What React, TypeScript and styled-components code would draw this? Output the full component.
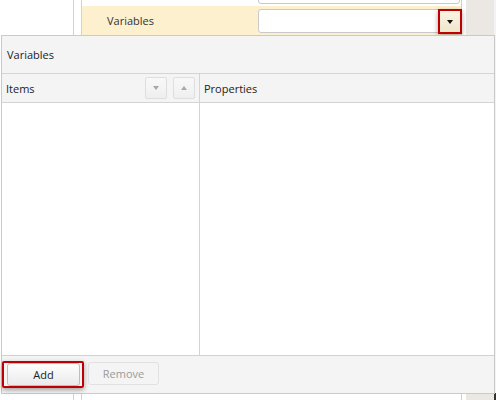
import React from "react";
import styled, { createGlobalStyle } from "styled-components";

const Global = createGlobalStyle`
  html, body { margin: 0; padding: 0; background: #ffffff; }
  body { font-family: "Open Sans", "Noto Sans", sans-serif; font-size: 11px; color: #222; }
  * { box-sizing: border-box; }
`;

const Page = styled.div`
  position: relative;
  width: 496px;
  height: 400px;
  overflow: hidden;
  display: flex;
  background: #fff;
`;

const LeftCol = styled.div`
  width: 74px;
  border-right: 1px solid #d2d2d2;
`;

const Gap = styled.div`
  width: 7px;
`;

const Grid = styled.div`
  width: 381px;
  border-left: 1px solid #d2d2d2;
  border-right: 1px solid #cfcfcf;
  display: flex;
  flex-direction: column;
`;

const Rows = styled.div`
  margin-top: -23px;
  display: flex;
  flex-direction: column;
`;

const Row = styled.div<{ $selected?: boolean }>`
  height: 29px;
  display: flex;
  align-items: flex-start;
  background: ${(p) => (p.$selected ? "#fcf0cf" : "#ffffff")};
`;

const Label = styled.div`
  width: 176px;
  padding-left: 25px;
  height: 29px;
  line-height: 29px;
  color: #333;
  font-size: 11px;
`;

const InputBox = styled.div`
  position: relative;
  margin-top: 3px;
  width: 202px;
  height: 24px;
  background: #fff;
  border: 1px solid #c9c9c9;
  border-radius: 3px;
`;

const DropButton = styled.div`
  position: absolute;
  right: -3px;
  top: -1px;
  width: 24px;
  height: 25px;
  border: 2px solid #c00000;
  background: linear-gradient(#fbf4e2, #efe6cd);
  box-shadow: 0 2px 5px rgba(0, 0, 0, 0.35);
  display: flex;
  align-items: center;
  justify-content: center;
`;

const Arrow = styled.span<{ $dir: "down" | "up"; $color: string; $w: number }>`
  width: 0;
  height: 0;
  border-left: ${(p) => p.$w / 2}px solid transparent;
  border-right: ${(p) => p.$w / 2}px solid transparent;
  ${(p) =>
    p.$dir === "down"
      ? `border-top: ${Math.round(p.$w * 0.6)}px solid ${p.$color};`
      : `border-bottom: ${Math.round(p.$w * 0.6)}px solid ${p.$color};`}
`;

const RightPanel = styled.div`
  flex: 1;
  display: flex;
  padding-left: 4px;
`;

const Strip = styled.div`
  width: 28px;
  background: #ebe8e4;
`;

const Edge = styled.div`
  width: 2px;
  background: linear-gradient(#f3f3f3 0, #f3f3f3 393px, #333 393px);
`;

const Dialog = styled.div`
  position: absolute;
  left: 1px;
  top: 35px;
  width: 494px;
  height: 359px;
  border: 1px solid #cacaca;
  background: #f4f4f4;
  display: flex;
  flex-direction: column;
`;

const TitleBar = styled.div`
  height: 38px;
  border-bottom: 1px solid #d4d4d4;
  display: flex;
  align-items: center;
  padding-left: 5px;
  color: #222;
  font-size: 11px;
`;

const Columns = styled.div`
  flex: 1;
  display: flex;
  min-height: 0;
`;

const Column = styled.div<{ $w?: number }>`
  ${(p) => (p.$w ? `width: ${p.$w}px;` : "flex: 1;")}
  ${(p) => (p.$w ? "border-right: 1px solid #d4d4d4;" : "")}
  display: flex;
  flex-direction: column;
`;

const ColHeader = styled.div`
  height: 29px;
  border-bottom: 1px solid #d4d4d4;
  display: flex;
  align-items: center;
  padding-left: 4px;
  color: #222;
  font-size: 11px;
`;

const HeaderText = styled.span`
  flex: 1;
`;

const SmallButtons = styled.div`
  display: flex;
  gap: 6px;
  margin-right: 4px;
`;

const SmallButton = styled.div`
  width: 22px;
  height: 22px;
  border: 1px solid #dedede;
  border-radius: 2px;
  background: linear-gradient(#f8f8f8, #efefef);
  display: flex;
  align-items: center;
  justify-content: center;
`;

const ColBody = styled.div`
  flex: 1;
  background: #ffffff;
`;

const Footer = styled.div`
  height: 38px;
  border-top: 1px solid #d2d2d2;
  display: flex;
  align-items: flex-start;
  padding-top: 5px;
  gap: 4px;
`;

const FocusRing = styled.div`
  width: 82px;
  height: 27px;
  border: 2px solid #c00000;
  border-radius: 2px;
  padding: 0 2px 0 3px;
  box-shadow: 0 2px 5px rgba(0, 0, 0, 0.35);
  display: flex;
  align-items: center;
`;

const Button = styled.div<{ $disabled?: boolean; $w: number }>`
  width: ${(p) => p.$w}px;
  height: 23px;
  border: 1px solid ${(p) => (p.$disabled ? "#e1e1e1" : "#bdbdbd")};
  border-radius: 3px;
  background: ${(p) =>
    p.$disabled ? "#f4f4f4" : "linear-gradient(#fdfdfd, #ebebeb)"};
  color: ${(p) => (p.$disabled ? "#9a9a9a" : "#222")};
  display: flex;
  align-items: center;
  justify-content: center;
  font-size: 11px;
`;

const RemoveWrap = styled.div`
  margin-top: 1px;
`;

export default function App() {
  return (
    <>
      <Global />
      <Page>
        <LeftCol />
        <Gap />
        <Grid>
          <Rows>
            <Row>
              <Label />
              <InputBox />
            </Row>
            <Row $selected>
              <Label>Variables</Label>
              <InputBox>
                <DropButton>
                  <Arrow $dir="down" $color="#111" $w={7} />
                </DropButton>
              </InputBox>
            </Row>
          </Rows>
        </Grid>
        <RightPanel>
          <Strip />
          <Edge />
        </RightPanel>

        <Dialog>
          <TitleBar>Variables</TitleBar>
          <Columns>
            <Column $w={198}>
              <ColHeader>
                <HeaderText>Items</HeaderText>
                <SmallButtons>
                  <SmallButton>
                    <Arrow $dir="down" $color="#a8a8a8" $w={6} />
                  </SmallButton>
                  <SmallButton>
                    <Arrow $dir="up" $color="#a8a8a8" $w={6} />
                  </SmallButton>
                </SmallButtons>
              </ColHeader>
              <ColBody />
            </Column>
            <Column>
              <ColHeader>
                <HeaderText>Properties</HeaderText>
              </ColHeader>
              <ColBody />
            </Column>
          </Columns>
          <Footer>
            <FocusRing>
              <Button $w={73}>Add</Button>
            </FocusRing>
            <RemoveWrap>
              <Button $w={71} $disabled>
                Remove
              </Button>
            </RemoveWrap>
          </Footer>
        </Dialog>
      </Page>
    </>
  );
}
